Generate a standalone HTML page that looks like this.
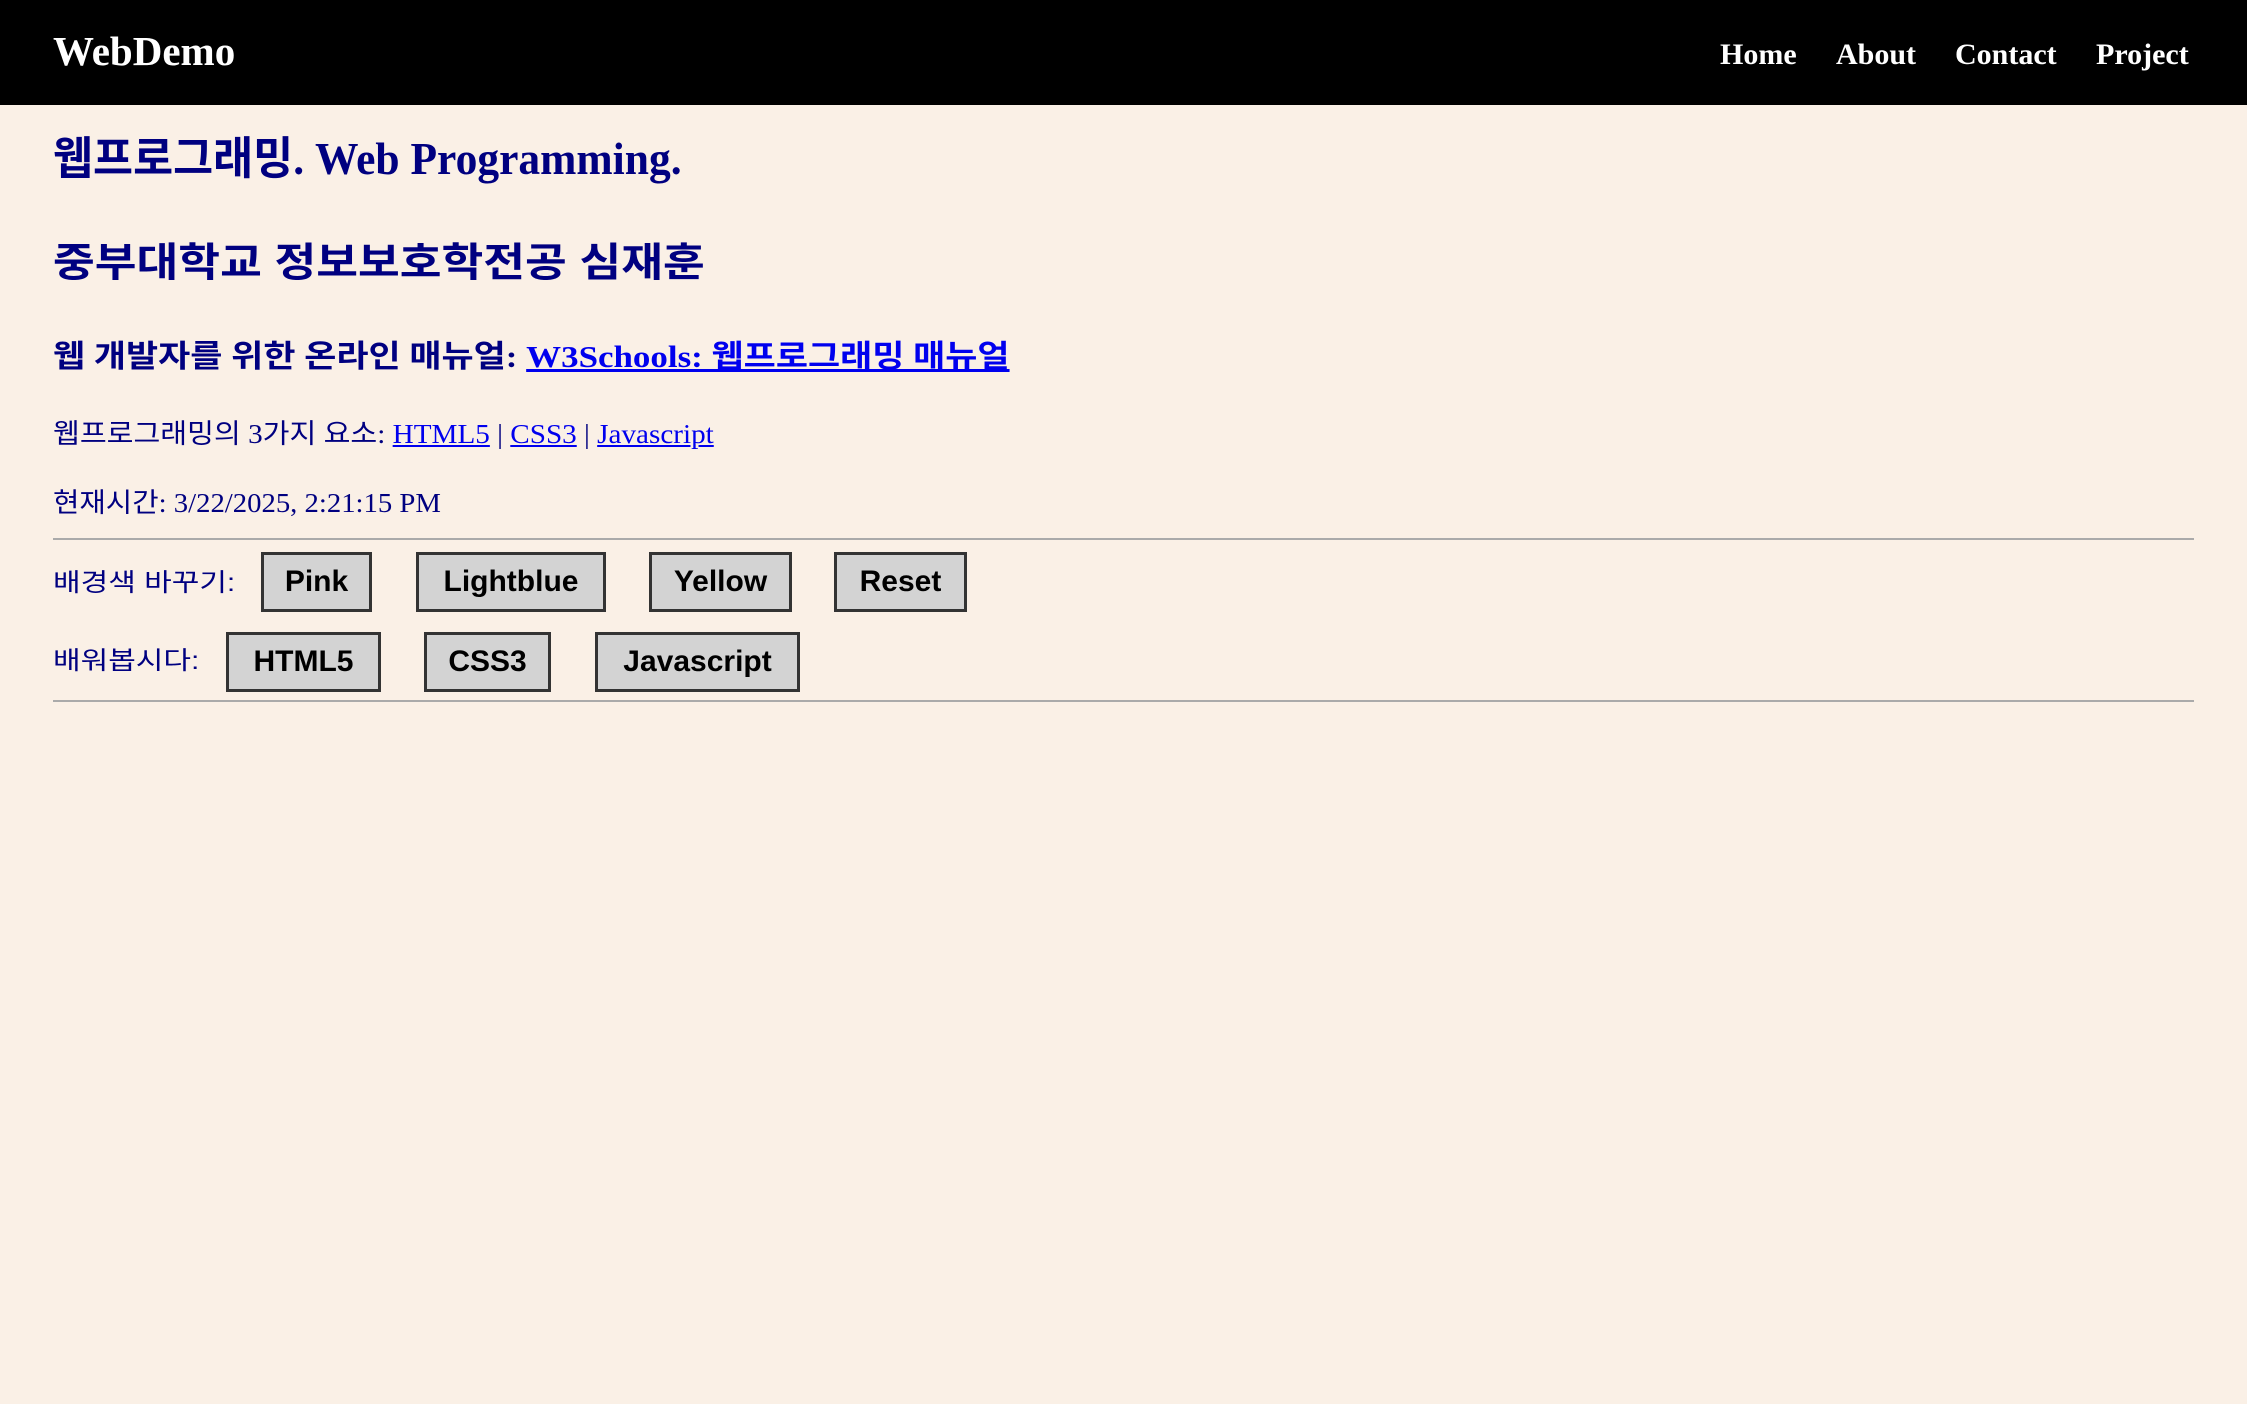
<!DOCTYPE html>
<html><head><meta charset="utf-8">
<style>
*{margin:0;padding:0;box-sizing:border-box}
html,body{width:2247px;height:1404px;overflow:hidden;background:#FAF0E6;font-family:"Liberation Serif","Noto Sans CJK KR",serif;color:#000080}
.nav{position:absolute;left:0;top:0;width:2247px;height:105px;background:#000}
.logo{position:absolute;left:53px;top:31px;font-size:41px;font-weight:bold;color:#fff;line-height:1}
.links{position:absolute;top:40px;font-size:30px;font-weight:bold;color:#fff;line-height:1}
.t{position:absolute;left:53px;white-space:nowrap;line-height:1;transform-origin:0 50%}
a{color:#0000EE;text-decoration:underline}
hr{position:absolute;left:53px;width:2141px;border:0;border-top:2px solid #aaa}
.b{position:absolute;background:#d3d3d3;border:3px solid #333;font-family:"Liberation Sans",sans-serif;font-weight:bold;font-size:30px;color:#000;display:flex;align-items:center;justify-content:center;height:60px}
.lbl{position:absolute;left:53px;font-size:25px;line-height:1;font-family:"Liberation Sans","Noto Sans CJK KR",sans-serif;color:#000080;transform:scaleX(1.2);transform-origin:0 50%;white-space:nowrap}
</style></head><body>
<div class="nav">
<div class="logo">WebDemo</div>
<div class="links" style="left:1720px">Home</div>
<div class="links" style="left:1836px">About</div>
<div class="links" style="left:1955px">Contact</div>
<div class="links" style="left:2096px">Project</div>
</div>
<div class="t" style="top:137px;font-size:45px;font-weight:bold;transform:scaleX(0.967)">웹프로그래밍. Web Programming.</div>
<div class="t" style="top:243px;font-size:40px;font-weight:bold;font-family:'Liberation Sans','Noto Sans CJK KR',sans-serif;transform:scaleX(1.135)">중부대학교 정보보호학전공 심재훈</div>
<div class="t" style="top:341px;font-size:31px;font-weight:bold;transform:scaleX(1.127)">웹 개발자를 위한 온라인 매뉴얼: <a>W3Schools: 웹프로그래밍 매뉴얼</a></div>
<div class="t" style="top:421px;font-size:27px;transform:scaleX(1.08)">웹프로그래밍의 3가지 요소: <a>HTML5</a> | <a>CSS3</a> | <a>Javascript</a></div>
<div class="t" style="top:490px;font-size:27px;transform:scaleX(1.063)">현재시간: 3/22/2025, 2:21:15 PM</div>
<hr style="top:538px">
<div class="lbl" style="top:571px">배경색 바꾸기:</div>
<div class="b" style="left:261px;top:552px;width:111px">Pink</div>
<div class="b" style="left:416px;top:552px;width:190px">Lightblue</div>
<div class="b" style="left:649px;top:552px;width:143px">Yellow</div>
<div class="b" style="left:834px;top:552px;width:133px">Reset</div>
<div class="lbl" style="top:649px">배워봅시다:</div>
<div class="b" style="left:226px;top:632px;width:155px">HTML5</div>
<div class="b" style="left:424px;top:632px;width:127px">CSS3</div>
<div class="b" style="left:595px;top:632px;width:205px">Javascript</div>
<hr style="top:700px">
</body></html>
